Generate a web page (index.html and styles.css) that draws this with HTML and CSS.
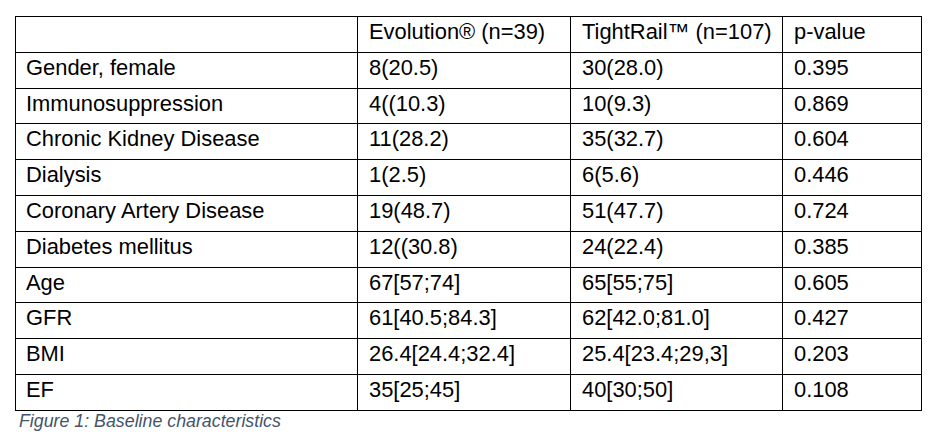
FILE: index.html
```html
<!DOCTYPE html>
<html lang="en">
<head>
<meta charset="utf-8">
<title>Baseline characteristics</title>
<link rel="stylesheet" href="styles.css">
</head>
<body>
<figure class="figure">
  <table class="data-table">
    <colgroup>
      <col class="col-label">
      <col class="col-evo">
      <col class="col-tight">
      <col class="col-p">
    </colgroup>
    <thead>
      <tr>
        <th></th>
        <th>Evolution® (n=39)</th>
        <th>TightRail™ (n=107)</th>
        <th>p-value</th>
      </tr>
    </thead>
    <tbody>
      <tr><td>Gender, female</td><td>8(20.5)</td><td>30(28.0)</td><td>0.395</td></tr>
      <tr><td>Immunosuppression</td><td>4((10.3)</td><td>10(9.3)</td><td>0.869</td></tr>
      <tr><td>Chronic Kidney Disease</td><td>11(28.2)</td><td>35(32.7)</td><td>0.604</td></tr>
      <tr><td>Dialysis</td><td>1(2.5)</td><td>6(5.6)</td><td>0.446</td></tr>
      <tr><td>Coronary Artery Disease</td><td>19(48.7)</td><td>51(47.7)</td><td>0.724</td></tr>
      <tr><td>Diabetes mellitus</td><td>12((30.8)</td><td>24(22.4)</td><td>0.385</td></tr>
      <tr><td>Age</td><td>67[57;74]</td><td>65[55;75]</td><td>0.605</td></tr>
      <tr><td>GFR</td><td>61[40.5;84.3]</td><td>62[42.0;81.0]</td><td>0.427</td></tr>
      <tr><td>BMI</td><td>26.4[24.4;32.4]</td><td>25.4[23.4;29,3]</td><td>0.203</td></tr>
      <tr><td>EF</td><td>35[25;45]</td><td>40[30;50]</td><td>0.108</td></tr>
    </tbody>
  </table>
  <figcaption class="caption">Figure 1: Baseline characteristics</figcaption>
</figure>
</body>
</html>
```

FILE: styles.css
```css
html, body {
  margin: 0;
  padding: 0;
  background: #ffffff;
}

body {
  padding: 16px 0 0 15px;
  font-family: "Liberation Sans", Arial, sans-serif;
  color: #000000;
}

.figure {
  margin: 0;
}

.data-table {
  border-collapse: collapse;
  table-layout: fixed;
  width: 906px;
  font-size: 21.9px;
  line-height: 25px;
}

.col-label { width: 342px; }
.col-evo { width: 213px; }
.col-tight { width: 212px; }
.col-p { width: 139px; }

.data-table tr {
  height: 35.8px;
}

.data-table th,
.data-table td {
  border: 1px solid #000000;
  padding: 2px 10px 0 10px;
  vertical-align: top;
  text-align: left;
  font-weight: normal;
  white-space: nowrap;
}

.data-table td + td,
.data-table th + th {
  padding-left: 11px;
}

.caption {
  margin: 0;
  padding-left: 4px;
  font-size: 17.8px;
  font-style: italic;
  color: #44546a;
  line-height: normal;
}
```
